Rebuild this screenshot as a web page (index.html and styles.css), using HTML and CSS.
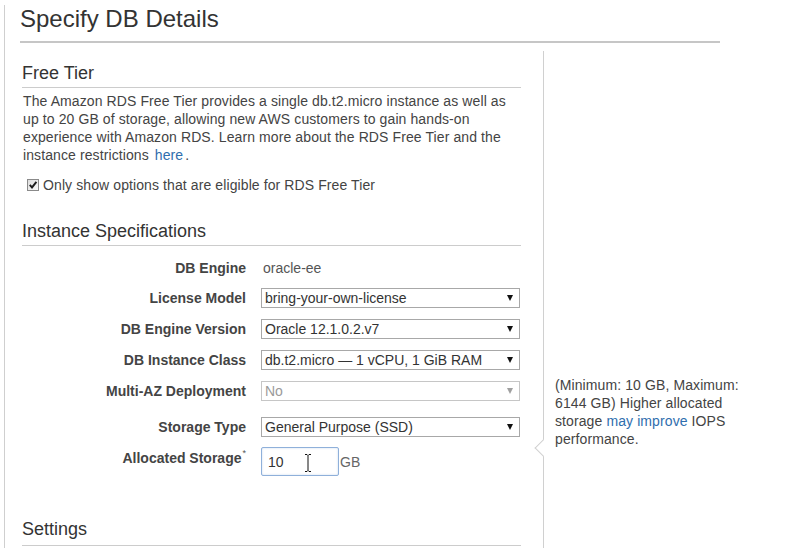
FILE: index.html
```html
<!DOCTYPE html>
<html>
<head>
<meta charset="utf-8">
<link rel="stylesheet" href="styles.css">
</head>
<body>
<div class="page">
  <h1 class="title">Specify DB Details</h1>
  <div class="cols">
    <div class="main">
      <h2 class="sec sec-free">Free Tier</h2>
      <p class="intro">The Amazon RDS Free Tier provides a single db.t2.micro instance as well as up to 20 GB of storage, allowing new AWS customers to gain hands-on experience with Amazon RDS. Learn more about the RDS Free Tier and the instance restrictions <a class="link here">here</a>.</p>
      <div class="check">
        <svg class="cb" width="12" height="12" viewBox="0 0 12 12">
          <defs>
            <linearGradient id="cbg" x1="0" y1="0" x2="1" y2="1">
              <stop offset="0" stop-color="#dcdcdc"/>
              <stop offset="1" stop-color="#fafafa"/>
            </linearGradient>
          </defs>
          <rect x="0.5" y="0.5" width="11" height="11" fill="url(#cbg)" stroke="#8a8a8a"/>
          <path d="M2.8 5.8 L5 8.4 L9.4 2.8" fill="none" stroke="#1a1a1a" stroke-width="1.9"/>
        </svg>
        <span>Only show options that are eligible for RDS Free Tier</span>
      </div>
      <h2 class="sec sec-spec">Instance Specifications</h2>
      <div class="form">
        <div class="row row-first">
          <div class="lbl">DB Engine</div>
          <div class="val">oracle-ee</div>
        </div>
        <div class="row">
          <div class="lbl">License Model</div>
          <div class="sel"><select class="field"><option>bring-your-own-license</option></select></div>
        </div>
        <div class="row">
          <div class="lbl">DB Engine Version</div>
          <div class="sel"><select class="field"><option>Oracle 12.1.0.2.v7</option></select></div>
        </div>
        <div class="row">
          <div class="lbl">DB Instance Class</div>
          <div class="sel"><select class="field"><option>db.t2.micro — 1 vCPU, 1 GiB RAM</option></select></div>
        </div>
        <div class="row row-gap">
          <div class="lbl">Multi-AZ Deployment</div>
          <div class="sel sel-disabled"><select class="field" disabled><option>No</option></select></div>
        </div>
        <div class="row">
          <div class="lbl">Storage Type</div>
          <div class="sel"><select class="field"><option>General Purpose (SSD)</option></select></div>
        </div>
        <div class="row row-input">
          <div class="lbl lbl-top">Allocated Storage<sup class="req">*</sup></div>
          <div class="inwrap">
            <input class="num" type="text" value="10">
            <svg class="ibeam" width="8" height="18" viewBox="0 0 8 18">
              <path d="M1 0.5 H3 L4 1.5 L5 0.5 H7 M4 1.5 V16.5 M1 17.5 H3 L4 16.5 L5 17.5 H7" fill="none" stroke="#111" stroke-width="1"/>
            </svg>
          </div>
          <span class="unit">GB</span>
        </div>
      </div>
      <h2 class="sec sec-settings">Settings</h2>
    </div>
    <div class="side">
      <div class="notch"></div>
      <div class="help">(Minimum: 10 GB, Maximum: 6144 GB) Higher allocated storage <a class="link">may improve</a> IOPS performance.</div>
    </div>
  </div>
</div>
</body>
</html>
```

FILE: styles.css
```css
* { box-sizing: border-box; }

html, body {
  margin: 0;
  padding: 0;
  background: #fff;
}

body {
  font-family: "Liberation Sans", Arial, sans-serif;
  color: #444;
  font-size: 14px;
}

.page {
  margin: 10px 0 0 4px;
  border-left: 1px solid #cfcfcf;
  height: 543px;
}

.title {
  margin: -5px 0 0 15px;
  width: 700px;
  font-size: 24px;
  font-weight: normal;
  line-height: 28px;
  color: #333;
  padding-bottom: 8px;
  border-bottom: 2px solid #c6c6c6;
}

.cols {
  display: flex;
  margin-top: 8px;
  height: 503px;
  overflow: hidden;
}

.main {
  width: 539px;
  padding: 0 22px 0 17px;
  border-right: 1px solid #d0d0d0;
}

.sec {
  margin: 0;
  font-size: 18px;
  font-weight: normal;
  line-height: 20px;
  color: #333;
  padding-bottom: 4px;
  border-bottom: 1px solid #cccccc;
}

.sec-free { margin-top: 12px; }
.sec-spec { margin-top: 27px; }
.sec-settings { margin-top: 43px; padding-bottom: 6px; }

.intro {
  margin: 4px 0 0 1px;
  line-height: 18px;
  color: #444;
  letter-spacing: 0.1px;
}

.link {
  color: #2f6eae;
  text-decoration: none;
}

.here { padding: 0 2px; }

.check {
  display: flex;
  align-items: center;
  margin: 12px 0 0 5px;
  height: 18px;
  color: #444;
  letter-spacing: 0.1px;
}

.cb { display: block; margin-right: 4px; }

.form {
  display: flex;
  flex-direction: column;
  margin-top: 8px;
}

.row {
  display: flex;
  align-items: center;
  height: 31px;
}

.row-first { height: 28px; }
.row-gap { margin-bottom: 5px; }

.row-input {
  align-items: flex-start;
  padding-top: 5px;
  height: 34px;
}

.lbl {
  width: 224px;
  text-align: right;
  font-weight: bold;
  color: #444;
  line-height: 18px;
  margin-right: 15px;
}

.lbl-top { margin-top: 2px; }

.req {
  font-weight: normal;
  font-size: 9px;
  vertical-align: top;
  line-height: 9px;
  margin-left: 1px;
  color: #555;
}

.val {
  color: #555;
  padding-left: 2px;
}

.sel {
  position: relative;
  width: 259px;
  height: 20px;
}

.sel::after {
  content: "";
  position: absolute;
  right: 7px;
  top: 7px;
  border-left: 3px solid transparent;
  border-right: 3px solid transparent;
  border-top: 6px solid #111;
}

.field {
  -webkit-appearance: none;
  appearance: none;
  width: 100%;
  height: 20px;
  margin: 0;
  padding: 0 0 0 3px;
  border: 1px solid #a8a8a8;
  border-radius: 0;
  background: #fff;
  font-family: "Liberation Sans", Arial, sans-serif;
  font-size: 14px;
  color: #333;
  line-height: 18px;
  outline: none;
}

.sel-disabled .field {
  color: #9a9a9a;
  border-color: #c6c6c6;
  opacity: 1;
}

.sel-disabled::after { border-top-color: #a0a0a0; }

.inwrap {
  position: relative;
  width: 78px;
  height: 29px;
}

.num {
  width: 78px;
  height: 29px;
  margin: 0;
  padding: 0 0 0 6px;
  border: 1px solid #8fb0da;
  border-radius: 2px;
  box-shadow: inset 0 0 2px rgba(120, 160, 215, 0.45);
  font-family: "Liberation Sans", Arial, sans-serif;
  font-size: 14px;
  color: #333;
  outline: none;
  background: #fff;
}

.ibeam {
  position: absolute;
  left: 43px;
  top: 7px;
}

.unit {
  color: #666;
  margin-left: 1px;
  line-height: 18px;
  margin-top: 6px;
}

.side {
  position: relative;
  flex: 1;
  padding-left: 11px;
}

.help {
  margin-top: 325px;
  width: 205px;
  line-height: 18px;
  color: #444;
  letter-spacing: 0.1px;
}

.notch {
  position: absolute;
  left: -7px;
  top: 391px;
  width: 12px;
  height: 12px;
  background: #fff;
  border-left: 1px solid #d0d0d0;
  border-bottom: 1px solid #d0d0d0;
  transform: rotate(45deg);
}
```
